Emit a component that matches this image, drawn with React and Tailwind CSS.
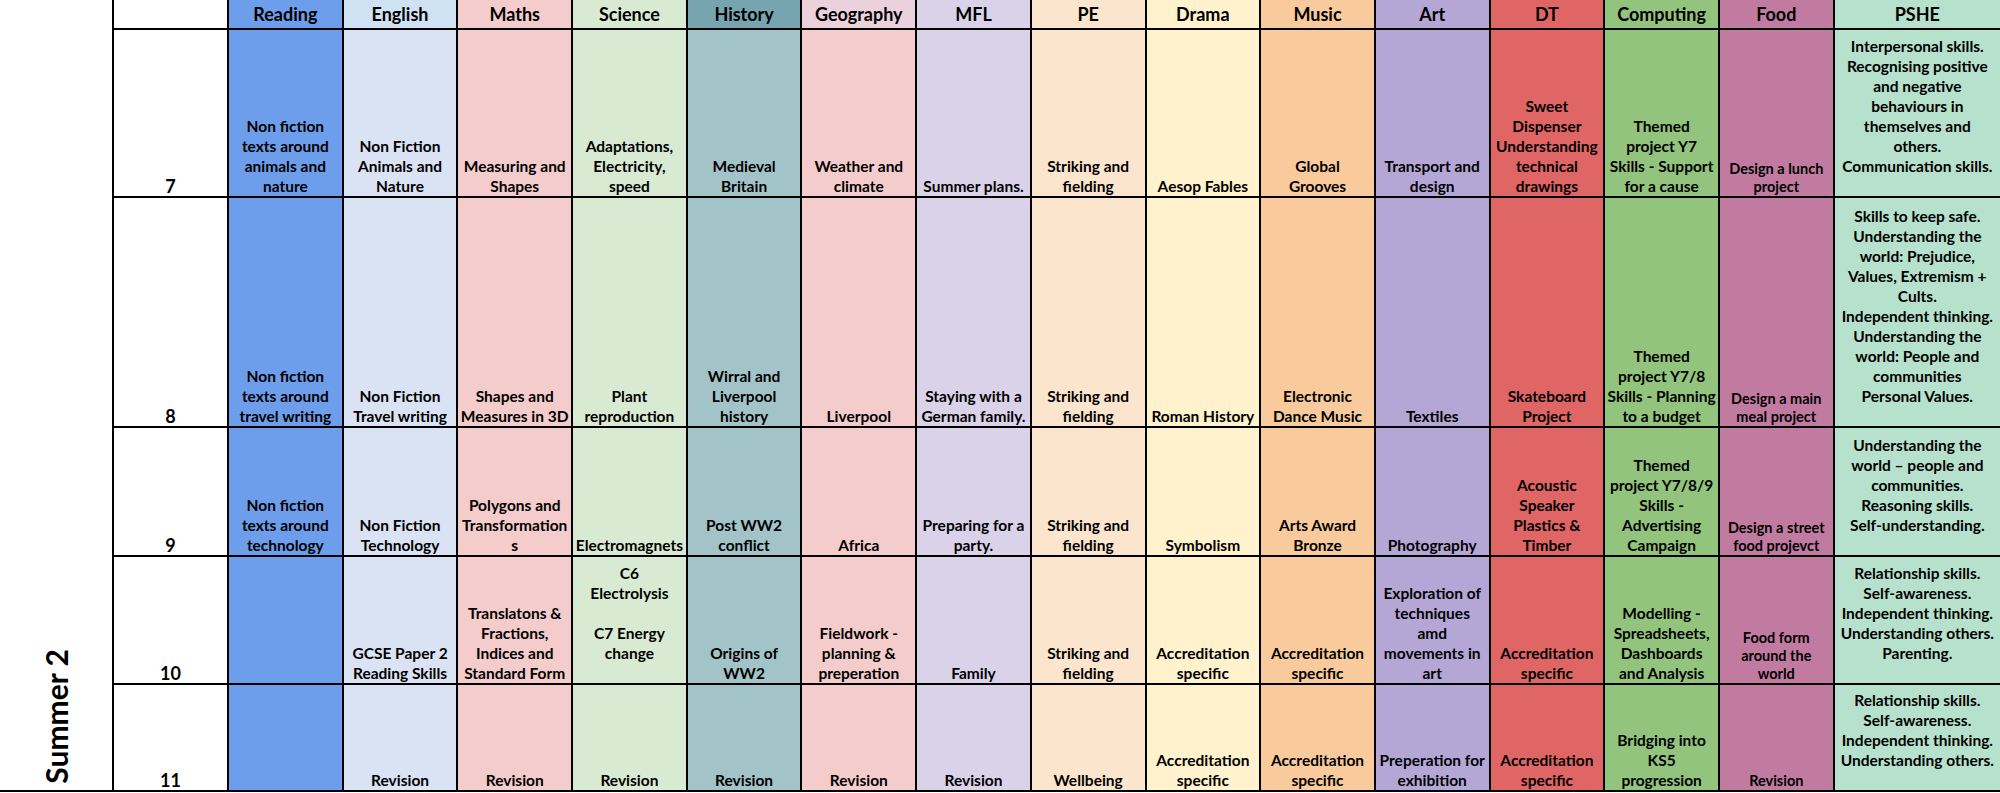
import React from 'react'

// Summer 2 curriculum overview, one row per year group
const subjects = [
    { name: 'Reading', head: 'bg-[#6d9eeb]', body: 'bg-[#6d9eeb]' },
    { name: 'English', head: 'bg-[#cfe2f3]', body: 'bg-[#dae3f3]' },
    { name: 'Maths', head: 'bg-[#f4cccc]', body: 'bg-[#f4cccc]' },
    { name: 'Science', head: 'bg-[#d9ead3]', body: 'bg-[#d9ead3]' },
    { name: 'History', head: 'bg-[#76a5af]', body: 'bg-[#a2c4c9]' },
    { name: 'Geography', head: 'bg-[#ead1dc]', body: 'bg-[#f4cccc]' },
    { name: 'MFL', head: 'bg-[#d9d2e9]', body: 'bg-[#d9d2e9]' },
    { name: 'PE', head: 'bg-[#fce5cd]', body: 'bg-[#fce5cd]' },
    { name: 'Drama', head: 'bg-[#fff2cc]', body: 'bg-[#fff2cc]' },
    { name: 'Music', head: 'bg-[#f9cb9c]', body: 'bg-[#f9cb9c]' },
    { name: 'Art', head: 'bg-[#b4a7d6]', body: 'bg-[#b4a7d6]' },
    { name: 'DT', head: 'bg-[#e06666]', body: 'bg-[#e06666]' },
    { name: 'Computing', head: 'bg-[#93c47d]', body: 'bg-[#93c47d]' },
    { name: 'Food', head: 'bg-[#c27ba0]', body: 'bg-[#c27ba0]', small: true },
    { name: 'PSHE', head: 'bg-[#b6e1cd]', body: 'bg-[#b6e1cd]' },
]

const rows = [
    {
        year: '7',
        cells: [
            ['Non fiction', 'texts around', 'animals and', 'nature'],
            ['Non Fiction', 'Animals and', 'Nature'],
            ['Measuring and', 'Shapes'],
            ['Adaptations,', 'Electricity,', 'speed'],
            ['Medieval', 'Britain'],
            ['Weather and', 'climate'],
            ['Summer plans.'],
            ['Striking and', 'fielding'],
            ['Aesop Fables'],
            ['Global', 'Grooves'],
            ['Transport and', 'design'],
            ['Sweet', 'Dispenser', 'Understanding', 'technical', 'drawings'],
            ['Themed', 'project Y7', 'Skills - Support', 'for a cause'],
            ['Design a lunch', 'project'],
            ['Interpersonal skills.', 'Recognising positive', 'and negative', 'behaviours in', 'themselves and', 'others.', 'Communication skills.', ''],
        ],
    },
    {
        year: '8',
        cells: [
            ['Non fiction', 'texts around', 'travel writing'],
            ['Non Fiction', 'Travel writing'],
            ['Shapes and', 'Measures in 3D'],
            ['Plant', 'reproduction'],
            ['Wirral and', 'Liverpool', 'history'],
            ['Liverpool'],
            ['Staying with a', 'German family.'],
            ['Striking and', 'fielding'],
            ['Roman History'],
            ['Electronic', 'Dance Music'],
            ['Textiles'],
            ['Skateboard', 'Project'],
            ['Themed', 'project Y7/8', 'Skills - Planning', 'to a budget'],
            ['Design a main', 'meal project'],
            ['Skills to keep safe.', 'Understanding the', 'world: Prejudice,', 'Values, Extremism +', 'Cults.', 'Independent thinking.', 'Understanding the', 'world: People and', 'communities', 'Personal Values.', ''],
        ],
    },
    {
        year: '9',
        cells: [
            ['Non fiction', 'texts around', 'technology'],
            ['Non Fiction', 'Technology'],
            ['Polygons and', 'Transformation', 's'],
            ['Electromagnets'],
            ['Post WW2', 'conflict'],
            ['Africa'],
            ['Preparing for a', 'party.'],
            ['Striking and', 'fielding'],
            ['Symbolism'],
            ['Arts Award', 'Bronze'],
            ['Photography'],
            ['Acoustic', 'Speaker', 'Plastics &', 'Timber'],
            ['Themed', 'project Y7/8/9', 'Skills -', 'Advertising', 'Campaign'],
            ['Design a street', 'food projevct'],
            ['Understanding the', 'world \u2013 people and', 'communities.', 'Reasoning skills.', 'Self-understanding.', ''],
        ],
    },
    {
        year: '10',
        cells: [
            [],
            ['GCSE Paper 2', 'Reading Skills'],
            ['Translatons &', 'Fractions,', 'Indices and', 'Standard Form'],
            ['C6', 'Electrolysis', '', 'C7 Energy', 'change', ''],
            ['Origins of', 'WW2'],
            ['Fieldwork -', 'planning &', 'preperation'],
            ['Family'],
            ['Striking and', 'fielding'],
            ['Accreditation', 'specific'],
            ['Accreditation', 'specific'],
            ['Exploration of', 'techniques', 'amd', 'movements in', 'art'],
            ['Accreditation', 'specific'],
            ['Modelling -', 'Spreadsheets,', 'Dashboards', 'and Analysis'],
            ['Food form', 'around the', 'world'],
            ['Relationship skills.', 'Self-awareness.', 'Independent thinking.', 'Understanding others.', 'Parenting.', ''],
        ],
    },
    {
        year: '11',
        cells: [
            [],
            ['Revision'],
            ['Revision'],
            ['Revision'],
            ['Revision'],
            ['Revision'],
            ['Revision'],
            ['Wellbeing'],
            ['Accreditation', 'specific'],
            ['Accreditation', 'specific'],
            ['Preperation for', 'exhibition'],
            ['Accreditation', 'specific'],
            ['Bridging into', 'KS5', 'progression'],
            ['Revision'],
            ['Relationship skills.', 'Self-awareness.', 'Independent thinking.', 'Understanding others.', ''],
        ],
    },
]

function Cell({ lines, className, small }) {
    return (
        <div
            className={`flex flex-col justify-end items-center text-center ${className} ${
                small ? 'text-[14.5px] leading-[18px]' : 'text-[15.5px] leading-[20px]'
            }`}
        >
            {lines.map((l, i) => (
                <span key={i} className="block whitespace-nowrap">
                    {l || '\u00a0'}
                </span>
            ))}
        </div>
    )
}

export default function App() {
    return (
        <div className="w-[2000px] h-[793px] bg-white overflow-hidden font-['Lato',sans-serif] font-bold text-black">
            <div className="grid grid-cols-[112px_113px_repeat(14,112.7px)_1fr] grid-rows-[28px_166px_228px_127px_126px_105px] gap-[2px] bg-black border-b-2 border-black">
                {/* Term label */}
                <div className="row-span-6 bg-white flex items-end justify-center pb-[6px]">
                    <span className="[writing-mode:vertical-rl] rotate-180 text-[30px] leading-none">Summer 2</span>
                </div>

                {/* Header */}
                <div className="bg-white" />
                {subjects.map((s) => (
                    <div key={s.name} className={`${s.head} flex items-center justify-center text-[18px] leading-none`}>
                        {s.name}
                    </div>
                ))}

                {/* Year rows */}
                {rows.map((r) => (
                    <React.Fragment key={r.year}>
                        <div className="bg-white flex items-end justify-center text-[18px] leading-[20px]">{r.year}</div>
                        {r.cells.map((lines, i) => (
                            <Cell key={i} lines={lines} className={subjects[i].body} small={subjects[i].small} />
                        ))}
                    </React.Fragment>
                ))}
            </div>
        </div>
    )
}
